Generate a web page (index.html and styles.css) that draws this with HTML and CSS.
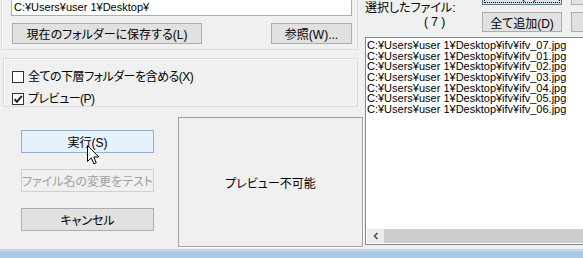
FILE: index.html
```html
<!DOCTYPE html>
<html lang="ja">
<head>
    <meta charset="UTF-8">
    <title>ファイル名の変更</title>
    <link rel="stylesheet" href="styles.css">
</head>
<body>
    <div class="screen">
        <div class="dialog">
            <div class="left">
                <div class="group group-folder">
                    <div class="path-box">C:¥Users¥user 1¥Desktop¥</div>
                    <div class="button-row">
                        <button class="btn btn-save">現在のフォルダーに保存する(L)</button>
                        <button class="btn btn-browse">参照(W)...</button>
                    </div>
                </div>
                <div class="group group-options">
                    <label class="check"><span class="box"></span>全ての下層フォルダーを含める(X)</label>
                    <label class="check"><span class="box">
                        <svg width="10" height="10" viewBox="0 0 10 10"><path d="M1.5 5.2 L4 7.8 L8.8 1.8" fill="none" stroke="#222" stroke-width="2"/></svg>
                    </span>プレビュー(P)</label>
                </div>
                <div class="lower">
                    <div class="actions">
                        <div class="run-wrap">
                            <button class="btn btn-run">実行(S)</button>
                            <!-- mouse pointer over the run button -->
                            <svg class="cursor" width="13" height="20" viewBox="0 0 13 20">
                                <path d="M0.5 0.5 L0.5 16.5 L4.3 12.8 L6.8 18.8 L9.2 17.8 L6.8 12 L11.8 12 Z" fill="#fff" stroke="#000" stroke-width="1"/>
                            </svg>
                        </div>
                        <button class="btn" disabled>ファイル名の変更をテスト</button>
                        <button class="btn">キャンセル</button>
                    </div>
                    <div class="preview">プレビュー不可能</div>
                </div>
            </div>
            <div class="right">
                <div class="right-head">
                    <div class="selected-label">
                        <div>選択したファイル:</div>
                        <div class="count">( 7 )</div>
                    </div>
                    <div class="btn-col">
                        <button class="btn btn-small btn-default"><span class="focus">追加(A)...</span></button>
                        <button class="btn btn-small">全て追加(D)</button>
                    </div>
                    <div class="btn-col">
                        <button class="btn btn-small">削除</button>
                        <button class="btn btn-small">クリア</button>
                    </div>
                </div>
                <div class="file-list">
                    <div class="items">
                        <div>C:¥Users¥user 1¥Desktop¥ifv¥ifv_07.jpg</div>
                        <div>C:¥Users¥user 1¥Desktop¥ifv¥ifv_01.jpg</div>
                        <div>C:¥Users¥user 1¥Desktop¥ifv¥ifv_02.jpg</div>
                        <div>C:¥Users¥user 1¥Desktop¥ifv¥ifv_03.jpg</div>
                        <div>C:¥Users¥user 1¥Desktop¥ifv¥ifv_04.jpg</div>
                        <div>C:¥Users¥user 1¥Desktop¥ifv¥ifv_05.jpg</div>
                        <div>C:¥Users¥user 1¥Desktop¥ifv¥ifv_06.jpg</div>
                    </div>
                    <div class="hscroll">
                        <span class="arrow">
                            <svg width="8" height="8" viewBox="0 0 8 8"><path d="M5.5 1 L2.5 4 L5.5 7" fill="none" stroke="#505050" stroke-width="1.6"/></svg>
                        </span>
                        <span class="thumb"></span>
                    </div>
                </div>
            </div>
        </div>
        <div class="taskbar"></div>
    </div>
</body>
</html>
```

FILE: styles.css
```css
body {
    margin: 0;
    overflow: hidden;
    background: #f0f0f0;
    font-family: "Liberation Sans", "Noto Sans CJK JP", sans-serif;
    font-size: 12px;
    color: #000;
    font-feature-settings: "palt";
}
.screen {
    margin-top: -20px;
}
.dialog {
    display: flex;
    height: 270px;
    box-sizing: border-box;
    border-bottom: 1px solid #cfcfcf;
    background: #f0f0f0;
}
.taskbar {
    height: 10px;
    border-top: 1px solid #dadada;
    background: #a9c8ea;
}
.left {
    width: 363px;
    flex-shrink: 0;
}
.group {
    border: 1px solid #dcdcdc;
    box-shadow: inset 1px 1px 0 #fff;
}
.group-folder {
    margin: 6px 0 0 1px;
    width: 357px;
    box-sizing: border-box;
    border-top: none;
    padding: 9px 5px 5px 9px;
}
.path-box {
    height: 21px;
    box-sizing: border-box;
    border: 1px solid #abadb3;
    background: #fff;
    padding: 5px 0 0 2px;
    font-size: 11px;
    line-height: 12px;
    white-space: nowrap;
}
.button-row {
    display: flex;
    justify-content: space-between;
    margin-top: 7px;
    padding-left: 1px;
}
.btn {
    font-family: inherit;
    font-size: 12px;
    font-feature-settings: "palt";
    color: #000;
    background: #e1e1e1;
    border: 1px solid #adadad;
    border-radius: 0;
    padding: 0;
    height: 21px;
    white-space: nowrap;
    overflow: hidden;
}
.btn-save {
    width: 190px;
}
.btn-browse {
    width: 81px;
}
.group-options {
    margin: 8px 0 0 3px;
    width: 355px;
    box-sizing: border-box;
    padding: 12px 0 1px 8px;
    display: flex;
    flex-direction: column;
    gap: 10px;
}
.check {
    display: flex;
    align-items: center;
    gap: 4px;
    height: 12px;
    line-height: 12px;
    white-space: nowrap;
    letter-spacing: -0.5px;
}
.box {
    width: 12px;
    height: 12px;
    box-sizing: border-box;
    border: 1px solid #333;
    background: #fff;
    display: flex;
    align-items: center;
    justify-content: center;
}
.lower {
    display: flex;
    margin-top: 10px;
}
.actions {
    display: flex;
    flex-direction: column;
    gap: 16px;
    margin: 13px 0 0 21px;
    width: 133px;
}
.actions .btn {
    width: 133px;
    height: 23px;
}
.run-wrap {
    position: relative;
    height: 23px;
}
.btn-run {
    background: #e5f1fb;
    border-color: #7eb4ea;
}
.cursor {
    position: absolute;
    left: 66px;
    top: 15px;
}
.btn:disabled {
    background: #f0f0f0;
    border-color: #d0d0d0;
    color: #a0a0a0;
}
.preview {
    margin-left: 24px;
    width: 185px;
    height: 130px;
    box-sizing: border-box;
    border: 1px solid #a0a0a0;
    box-shadow: 1px 1px 0 #fff;
    display: flex;
    align-items: center;
    justify-content: center;
}
.right {
    flex: 1;
    min-width: 0;
}
.right-head {
    display: flex;
    height: 52px;
    padding-top: 5px;
    box-sizing: border-box;
}
.right-head > * {
    flex-shrink: 0;
}
.selected-label {
    margin: 17px 0 0 2px;
    width: 117px;
    line-height: 13px;
    white-space: nowrap;
}
.count {
    padding-left: 59px;
    margin-top: 1px;
}
.btn-col {
    display: flex;
    flex-direction: column;
    gap: 7px;
    margin-right: 9px;
}
.btn-small {
    width: 80px;
    height: 20px;
}
.btn-default {
    border-color: #3c7fb1;
    padding: 2px;
}
.focus {
    display: block;
    height: 100%;
    box-sizing: border-box;
    outline: 1px dotted #000;
    line-height: 14px;
}
.file-list {
    margin: 5px 0 0 2px;
    width: 240px;
    height: 208px;
    box-sizing: border-box;
    border: 1px solid #828790;
    background: #fff;
    display: flex;
    flex-direction: column;
}
.items {
    flex: 1;
    padding: 2px 0 0 1px;
    font-size: 11px;
    line-height: 10.67px;
    white-space: nowrap;
    font-feature-settings: normal;
}
.hscroll {
    display: flex;
    height: 14px;
    margin-left: 1px;
    margin-bottom: 1px;
}
.arrow {
    width: 17px;
    background: #ececec;
    display: flex;
    align-items: center;
    justify-content: center;
}
.thumb {
    flex: 1;
    background: #cdcdcd;
}
```
